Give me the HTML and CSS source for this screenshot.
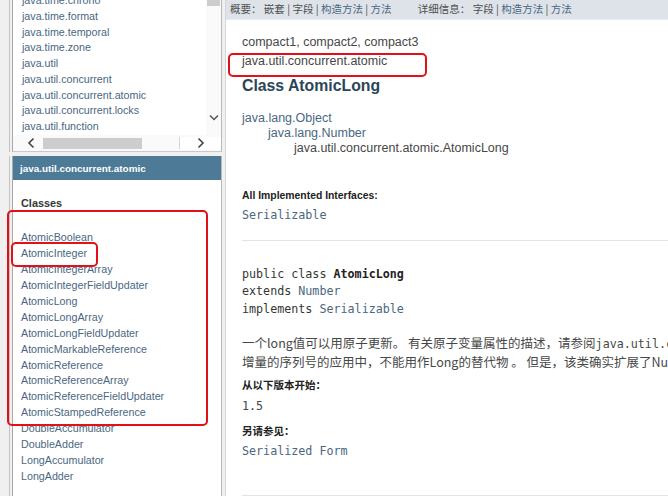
FILE: index.html
```html
<!DOCTYPE html>
<html lang="zh-CN">
<head>
<meta charset="utf-8">
<title>AtomicLong</title>
<link rel="stylesheet" href="styles.css">
</head>
<body>
<div class="page">
  <aside class="left">
    <div class="frame pkg">
      <div class="pkg-body">
        <ul class="pkg-list">
          <li>java.time.chrono</li>
          <li>java.time.format</li>
          <li>java.time.temporal</li>
          <li>java.time.zone</li>
          <li>java.util</li>
          <li>java.util.concurrent</li>
          <li>java.util.concurrent.atomic</li>
          <li>java.util.concurrent.locks</li>
          <li>java.util.function</li>
        </ul>
        <div class="vscroll">
          <div class="vthumb"></div>
          <svg class="vdown" width="10" height="7" viewBox="0 0 10 7"><path d="M1 1.5 L5 5.5 L9 1.5" fill="none" stroke="#555" stroke-width="1.5"/></svg>
        </div>
      </div>
      <div class="hscroll">
        <svg class="harrow" width="11" height="12" viewBox="0 0 11 12"><path d="M7.5 1.5 L3 6 L7.5 10.5" fill="none" stroke="#444" stroke-width="1.6"/></svg>
        <div class="hthumb"></div>
        <svg class="harrow right" width="11" height="12" viewBox="0 0 11 12"><path d="M3.5 1.5 L8 6 L3.5 10.5" fill="none" stroke="#444" stroke-width="1.6"/></svg>
      </div>
    </div>
    <div class="frame cls">
      <div class="bar">java.util.concurrent.atomic</div>
      <h2 class="cls-title">Classes</h2>
      <ul class="cls-list">
        <li>AtomicBoolean</li>
        <li>AtomicInteger</li>
        <li>AtomicIntegerArray</li>
        <li>AtomicIntegerFieldUpdater</li>
        <li>AtomicLong</li>
        <li>AtomicLongArray</li>
        <li>AtomicLongFieldUpdater</li>
        <li>AtomicMarkableReference</li>
        <li>AtomicReference</li>
        <li>AtomicReferenceArray</li>
        <li>AtomicReferenceFieldUpdater</li>
        <li>AtomicStampedReference</li>
        <li>DoubleAccumulator</li>
        <li>DoubleAdder</li>
        <li>LongAccumulator</li>
        <li>LongAdder</li>
      </ul>
    </div>
  </aside>
  <main class="right">
    <nav class="subnav">
      <span class="grp">概要：&nbsp;嵌套 | 字段 | <a>构造方法</a> | <a>方法</a></span>
      <span class="grp second">详细信息：&nbsp;字段 | <a>构造方法</a> | <a>方法</a></span>
    </nav>
    <div class="content">
      <div class="profile">compact1, compact2, compact3</div>
      <div class="pkgname">java.util.concurrent.atomic</div>
      <h1 class="title">Class AtomicLong</h1>
      <ul class="tree">
        <li class="lnk">java.lang.Object</li>
        <li class="lnk ind1">java.lang.Number</li>
        <li class="ind2">java.util.concurrent.atomic.AtomicLong</li>
      </ul>
      <div class="label first">All Implemented Interfaces:</div>
      <div class="code lnk ser">Serializable</div>
      <hr class="rule">
      <pre class="sig">public class <b>AtomicLong</b>
extends <span class="lnk">Number</span>
implements <span class="lnk">Serializable</span></pre>
      <div class="desc">
        <div class="dline">一个long值可以用原子更新。 有关原子变量属性的描述，请参阅<span class="code">java.util.concurrent.atomic</span>包规范。</div>
        <div class="dline">增量的序列号的应用中，不能用作Long的替代物 。 但是，该类确实扩展了Number以允许通过处理基于数字类的工具和实用程序进行统一访问。</div>
      </div>
      <div class="cjk-label since">从以下版本开始：</div>
      <div class="code ver">1.5</div>
      <div class="cjk-label see">另请参见：</div>
      <div class="code lnk form">Serialized Form</div>
      <hr class="rule last">
    </div>
  </main>
  <div class="mark mark-pkg"></div>
  <div class="mark mark-list"></div>
  <div class="mark mark-int"></div>
</div>
</body>
</html>
```
FILE: styles.css
```css
* { box-sizing: border-box; }
html, body { margin: 0; padding: 0; }
body {
  width: 668px;
  height: 496px;
  overflow: hidden;
  background: #ffffff;
  font-family: "Liberation Sans", Arial, "Noto Sans CJK SC", sans-serif;
  color: #474747;
}
ul { list-style: none; margin: 0; padding: 0; }
a { color: #4a6782; text-decoration: none; }

.page {
  position: relative;
  display: flex;
  width: 668px;
  height: 496px;
}

/* ---------- left column ---------- */
.left {
  width: 225px;
  flex: none;
  background: #f0f0f0;
  display: flex;
  flex-direction: column;
  gap: 4px;
  padding: 0 3px 0 12px;
}
.frame {
  background: #ffffff;
  border-left: 1px solid #a9a9a9;
  border-right: 1px solid #b8b8b8;
  box-shadow: -2px 0 0 #f0f0f0, -3px 0 0 #c4c4c4;
}
.pkg {
  height: 152px;
  flex: none;
  display: flex;
  flex-direction: column;
  border-bottom: 1px solid #c9c9c9;
}
.pkg-body {
  height: 135px;
  display: flex;
  overflow: hidden;
}
.pkg-list {
  flex: 1;
  margin-top: -7px;
  padding-left: 9px;
  font-size: 10.7px;
  line-height: 15.75px;
  color: #4a6782;
  white-space: nowrap;
}
.vscroll {
  width: 15px;
  flex: none;
  display: flex;
  flex-direction: column;
  align-items: center;
  background: #fafafa;
}
.vthumb {
  width: 13px;
  height: 6px;
  background: #cdcdcd;
}
.vdown { margin-top: 108px; }
.hscroll {
  height: 16px;
  display: flex;
  align-items: center;
  padding-left: 13px;
  background: #fafafa;
}
.harrow { flex: none; }
.hthumb {
  width: 99px;
  height: 11px;
  margin-left: 6px;
  background: #cdcdcd;
}
.harrow.right { margin-left: 37px; }

.cls {
  flex: 1;
  padding-left: 0;
}
.bar {
  height: 24px;
  background: #4d7a97;
  color: #ffffff;
  font-weight: bold;
  font-size: 9.9px;
  line-height: 25px;
  padding-left: 7px;
  white-space: nowrap;
}
.cls-title {
  margin: 16px 0 0 0;
  padding-left: 8px;
  font-size: 10.9px;
  line-height: 14px;
  font-weight: bold;
  color: #353833;
}
.cls-list {
  margin-top: 20px;
  padding-left: 8px;
  font-size: 10.7px;
  line-height: 15.93px;
  color: #4a6782;
  white-space: nowrap;
}

/* ---------- right column ---------- */
.right {
  flex: 1;
  min-width: 0;
  overflow: hidden;
  border-left: 1px solid #d6d6d6;
  background: #ffffff;
}
.subnav {
  height: 20px;
  background: #dee3e9;
  border-bottom: 1px solid #e8ecf0;
  padding-left: 4px;
  font-family: "Noto Sans CJK SC", "Liberation Sans", sans-serif;
  font-size: 10.5px;
  line-height: 17px;
  color: #4f4f4f;
  white-space: nowrap;
}
.subnav .second { margin-left: 24px; }
.content {
  padding: 13px 0 0 16px;
  white-space: nowrap;
}
.profile, .pkgname {
  font-size: 12.5px;
  line-height: 19px;
  color: #474747;
}
.title {
  margin: 5px 0 0 0;
  font-size: 15.8px;
  line-height: 20px;
  font-weight: bold;
  color: #2c4557;
}
.tree {
  margin-top: 14.5px;
  font-size: 12.5px;
  line-height: 15px;
  color: #474747;
}
.lnk { color: #4a6782; }
.ind1 { padding-left: 26px; }
.ind2 { padding-left: 52px; }
.label {
  margin-top: 33px;
  font-size: 10.4px;
  line-height: 14px;
  font-weight: bold;
  color: #222222;
}
.code {
  font-family: "DejaVu Sans Mono", "Liberation Mono", monospace;
  font-size: 11.7px;
}
.ser {
  margin-top: 4.5px;
  line-height: 16px;
}
.rule {
  margin: 17px 0 0 0;
  border: 0;
  border-top: 1px solid #e3e3e3;
  height: 0;
}
.sig {
  margin: 24.5px 0 0 0;
  font-family: "DejaVu Sans Mono", "Liberation Mono", monospace;
  font-size: 11.7px;
  line-height: 17.7px;
  color: #353833;
}
.sig b { color: #222222; }
.desc {
  margin-top: 15.5px;
  font-family: "Noto Sans CJK SC", "Liberation Sans", sans-serif;
  font-size: 12.5px;
  line-height: 17px;
  color: #474747;
}
.desc .code { font-size: 11.7px; }
.cjk-label {
  font-family: "Noto Sans CJK SC", "Liberation Sans", sans-serif;
  font-size: 10.5px;
  line-height: 14px;
  font-weight: bold;
  color: #222222;
}
.since { margin-top: 8px; }
.ver {
  margin-top: 6px;
  line-height: 16px;
  color: #474747;
}
.see { margin-top: 10px; }
.form {
  margin-top: 5px;
  line-height: 16px;
}
.rule.last { margin-top: 36px; }

/* ---------- red annotation boxes ---------- */
.mark {
  position: absolute;
  border: 2px solid #e3101a;
  border-radius: 5px;
  pointer-events: none;
}
.mark-pkg { left: 228px; top: 53px; width: 199px; height: 24px; }
.mark-list { left: 7px; top: 210px; width: 201px; height: 216px; }
.mark-int { left: 11px; top: 242px; width: 87px; height: 25px; }
```
